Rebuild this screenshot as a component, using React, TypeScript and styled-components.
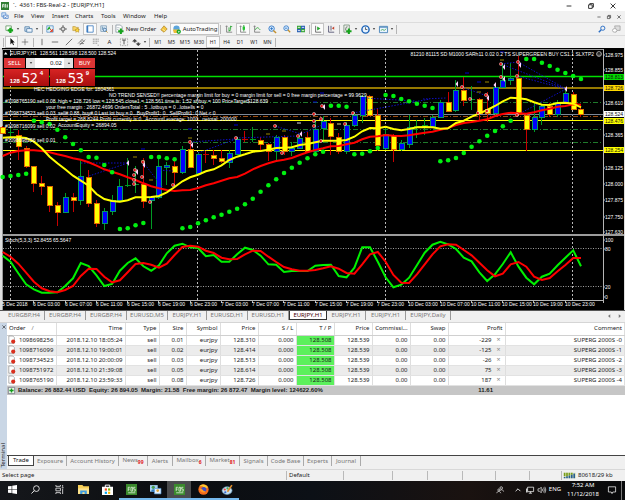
import React from "react";
import styled, { createGlobalStyle, css } from "styled-components";

const GlobalStyle = createGlobalStyle`
  * { box-sizing: border-box; }
  body { margin: 0; background: #f0f0f0; }
  button, input, table { font: inherit; color: inherit; }
  button { border: 0; padding: 0; background: none; }
`;

const FONT = `"Noto Sans", "Open Sans", sans-serif`;
const CHART_FONT = `"Liberation Sans", sans-serif`;

/* ---------- window frame ---------- */

const Page = styled.div`
  min-height: 100vh;
  display: flex;
  flex-direction: column;
  background: #f0f0f0;
  color: #1b1b1b;
  font: 6px/9px ${FONT};
  white-space: nowrap;
`;

const TitleBar = styled.header`
  height: 11px;
  display: flex;
  align-items: center;
  gap: 4px;
  padding: 0 1px;
  background: #fff;
`;

const TitleText = styled.h1`
  flex: 1;
  margin: 0;
  font: inherit;
`;

const WindowButtons = styled.div`
  display: flex;
`;

const WindowButton = styled.button<{ $w: number }>`
  width: ${(p) => p.$w}px;
  height: 9px;
  display: grid;
  place-items: center;
`;

const MenuBar = styled.nav`
  height: 11px;
  display: flex;
  align-items: center;
  padding: 0 2px 0 1px;
  background: #f1f1f1;
`;

const MenuItem = styled.button<{ $w: number }>`
  width: ${(p) => p.$w}px;
  height: 10px;
  text-align: left;
`;

const Spacer = styled.span`
  flex: 1;
`;

const Toolbar = styled.div`
  height: 13px;
  display: flex;
  align-items: center;
  padding: 0 2px;
  background: #f1f1f1;
  border-top: 1px solid #dcdcdc;
`;

const ToolButton = styled.button<{ $w: number; $on?: boolean }>`
  width: ${(p) => p.$w}px;
  height: 12px;
  display: flex;
  align-items: center;
  justify-content: center;
  gap: 2px;
  font-size: ${(p) => (p.$w < 15 ? 5 : 6)}px;
  ${(p) =>
    p.$on &&
    css`
      background: #fbfbfb;
      border: 1px solid #c4c4c4;
    `}
`;

const ToolSeparator = styled.span`
  width: 1px;
  height: 9px;
  margin: 0 1px;
  background: #b5b5b5;
`;

/* ---------- chart ---------- */

const ChartArea = styled.section`
  position: relative;
  background: #000;
`;

const ChartSvg = styled.svg`
  display: block;
  width: 100%;
  height: auto;
`;

const TradePanel = styled.form`
  position: absolute;
  left: 4px;
  top: 10px;
  width: 91px;
  display: grid;
  grid-template-columns: 1fr 1fr;
  gap: 1px;
  color: #fff;
`;

const LotRow = styled.div`
  grid-column: 1 / -1;
  height: 10px;
  display: flex;
  gap: 1px;
`;

const SideButton = styled.button`
  width: 21px;
  background: #dc3535;
  font-size: 6px;
  color: #fff;
`;

const LotBox = styled.div`
  flex: 1;
  min-width: 0;
  display: flex;
  align-items: stretch;
  background: #fff;
  color: #111;
`;

const Step = styled.button`
  width: 9px;
  background: #e3e3e3;
  display: grid;
  place-items: center;
`;

const LotInput = styled.input`
  flex: 1;
  min-width: 0;
  border: 0;
  padding: 0 2px;
  text-align: right;
  background: #fff;
`;

const PriceButton = styled.button`
  height: 17px;
  display: flex;
  align-items: flex-end;
  justify-content: center;
  gap: 2px;
  padding-bottom: 1px;
  background: linear-gradient(#d72424, #a90d0d);
  color: #fff;
  font: bold 6px/8px ${CHART_FONT};
`;

const BigDigits = styled.span`
  font: 14px/14px ${FONT};
`;

const Pip = styled.span`
  align-self: flex-start;
`;

const ChartTabs = styled.nav`
  height: 12px;
  display: flex;
  align-items: flex-start;
  padding-left: 4px;
  border-top: 1px solid #555;
  background: #f0f0f0;
  color: #777;
`;

const ChartTab = styled.button<{ $w: number; $on?: boolean }>`
  width: ${(p) => p.$w}px;
  height: 9px;
  border-right: 1px solid #999;
  ${(p) =>
    p.$on &&
    css`
      background: #fff;
      border: 1px solid #333;
      border-top: 0;
      color: #400;
    `}
`;

const TabArrows = styled.span`
  width: 13px;
  height: 9px;
  display: flex;
  justify-content: space-between;
  align-items: center;
  margin-right: 4px;
`;

/* ---------- terminal ---------- */

const Terminal = styled.section`
  flex: 1;
  display: flex;
  background: #fff;
  border-top: 1px solid #d5d5d5;
`;

const TerminalRail = styled.aside`
  width: 7px;
  display: flex;
  flex-direction: column;
  align-items: center;
  justify-content: space-between;
  padding: 2px 0 1px;
  background: #c9d6e5;
`;

const RailLabel = styled.span`
  writing-mode: vertical-rl;
  transform: rotate(180deg);
  line-height: 7px;
`;

const TerminalBody = styled.div`
  flex: 1;
  display: flex;
  flex-direction: column;
  justify-content: space-between;
`;

const Orders = styled.table`
  width: 100%;
  table-layout: fixed;
  border-collapse: collapse;
  text-align: right;
`;

const HeadCell = styled.th`
  height: 12px;
  padding: 0 2px;
  font-weight: normal;
  border-right: 1px solid #dedede;
  border-bottom: 1px solid #d0d0d0;
  &:first-child {
    text-align: left;
  }
`;

const SortMark = styled.span`
  margin-left: 6px;
  color: #777;
`;

const OrderRow = styled.tr`
  &:nth-child(even) {
    background: #ececec;
  }
`;

const Cell = styled.td<{ $hit?: boolean }>`
  height: 10px;
  padding: 0 2px 0 0;
  border-right: 1px solid #dedede;
  border-bottom: 1px solid #e2e2e2;
  ${(p) => p.$hit && "background: #5cf05c;"}
`;

const OrderCell = styled.div`
  display: flex;
  align-items: center;
  gap: 3px;
  padding-left: 1px;
`;

const ProfitCell = styled.div`
  display: grid;
  grid-template-columns: 1fr 8px;
  gap: 3px;
`;

const CloseOrder = styled.button`
  color: #888;
  font-size: 7px;
  line-height: 8px;
`;

const BalanceRow = styled.tr`
  background: #c6c6c6;
  font-family: ${CHART_FONT};
  font-weight: bold;
`;

const BalanceCell = styled.td`
  height: 9px;
  padding: 0 12px 0 0;
`;

const TerminalTabs = styled.nav`
  height: 14px;
  display: flex;
  align-items: flex-start;
  padding-left: 1px;
  background: #f0f0f0;
  border-top: 1px solid #444;
  color: #777;
`;

const TerminalTab = styled.button<{ $w: number; $on?: boolean }>`
  width: ${(p) => p.$w}px;
  height: 10px;
  border-right: 1px solid #aaa;
  ${(p) =>
    p.$on &&
    css`
      background: #fff;
      color: #111;
      border: 1px solid #444;
      border-top: 0;
    `}
`;

const Count = styled.sub`
  color: #e02020;
  font: bold 5px/5px ${FONT};
`;

const StatusBar = styled.footer`
  height: 12px;
  display: flex;
  align-items: center;
  background: #f0f0f0;
  border-top: 1px solid #d8d8d8;
`;

const StatusCell = styled.span<{ $w?: number }>`
  ${(p) => (p.$w ? `width: ${p.$w}px;` : "flex: 1;")}
  height: 9px;
  display: flex;
  align-items: center;
  gap: 2px;
  padding-left: 2px;
  & + & {
    border-left: 1px solid #b9b9b9;
  }
`;

/* ---------- task bar ---------- */

const TaskBar = styled.nav`
  height: 19px;
  display: flex;
  align-items: stretch;
  background: linear-gradient(90deg, #15171b, #0b0d10 30%, #0c1016 50%, #1a1210 75%, #08090b);
  color: #fff;
`;

const TaskButton = styled.button<{ $w?: number; $open?: boolean; $on?: boolean }>`
  width: ${(p) => p.$w ?? 24}px;
  display: grid;
  place-items: center;
  background: ${(p) => (p.$on ? "#4a4b4d" : "none")};
  border-bottom: 2px solid ${(p) => (p.$open ? "#76b9ed" : "transparent")};
`;

const Clock = styled.time`
  width: 32px;
  margin: 0 3px 0 5px;
  text-align: center;
`;

const DesktopEdge = styled.button`
  width: 4px;
  border-left: 1px solid #777;
`;

/* ---------- icons ---------- */

const art: Record<string, React.ReactNode> = {
  app: (<><rect width="10" height="10" fill="#2f7d32" /><path d="M2 7V3h2M2 5h2M5 7V3h1v4M8 3v4" stroke="#fff" fill="none" /></>),
  windows: (<><path d="M1 1h5v5H1z" fill="#dceafc" stroke="#5a8fd0" /><path d="M3 4h6v4H3z" fill="#fff" stroke="#4a80c8" /><path d="M4 6l2 1 2-2" stroke="#3a70c0" fill="none" /></>),
  newChart: (<><path d="M1 1h6v5H1z" fill="#fff" stroke="#6f9e6f" /><path d="M6 3v6M3 6h6" stroke="#15a51b" strokeWidth="2.6" /></>),
  profiles: (<><path d="M1 2h5v5H1z" fill="#d5e5f5" stroke="#5b87ae" /><path d="M3 4h6v4H3z" fill="#eef6ff" stroke="#5b87ae" /></>),
  market: (<><path d="M1 1h8v8H1z" fill="#e4f0fb" stroke="#5a93c6" /><path d="M2 6l2-3 1 2" stroke="#1aa31f" fill="none" strokeWidth="1.5" /><path d="M5 5l3 3M8 5v3H5" stroke="#dc4328" fill="none" strokeWidth="1.2" /></>),
  target: (<><circle cx="5" cy="5" r="2.6" fill="none" stroke="#555" /><path d="M5 0v4M5 6v4M0 5h4M6 5h4" stroke="#555" /></>),
  folder: (<><path d="M1 2h3l1 1h3v4H1z" fill="#f9d567" stroke="#b18a25" strokeWidth=".7" /><path d="M6.500 4l1 1.600 2 .3-1.400 1.200.3 2-1.900-1-1.800 1 .3-2L3.600 6l2-.4z" fill="#ffdd41" stroke="#a97b14" strokeWidth=".6" /></>),
  terminal: (<><path d="M1 1h8v8H1z" fill="#fff" stroke="#3b7bc0" /><path d="M2 1v8" stroke="#3b7bc0" strokeWidth="1.5" /></>),
  tester: (<><path d="M1 1h7v7H1z" fill="#e8f2fb" stroke="#7899b5" /><path d="M3 2v4M5 3v3" stroke="#58a" /><circle cx="6" cy="6" r="2" fill="#cfe7ff" stroke="#47729d" /><path d="M7.500 7.500L9.500 9.500" stroke="#bd8b24" /></>),
  newOrder: (<><path d="M1 0h5l2 2v6H1z" fill="#fff" stroke="#7b8a96" strokeWidth=".8" /><path d="M2 3h3M2 5h2" stroke="#89a" strokeWidth=".6" /><path d="M6.500 4v6M3.500 7h6" stroke="#16a31c" strokeWidth="2.300" /></>),
  editor: (<><path d="M1 6l4-5 4 4-4 4z" fill="#f4c640" stroke="#a2771a" strokeWidth=".8" /><path d="M3 5l4 3" stroke="#fff1a8" /></>),
  auto: (<><circle cx="5" cy="4" r="3.500" fill="#5ba4dc" /><path d="M1 5h7l-1 4H2z" fill="#edbd3b" /><circle cx="7.500" cy="7.500" r="2.400" fill="#17a52a" /><path d="M7 6.300v2.400l1.800-1.200z" fill="#fff" /></>),
  bars: (<><path d="M2 1v8h7M1 2l1-1 1 1" stroke="#555" fill="none" strokeWidth=".8" /><path d="M5 3v5M7 1v5M5 7h2M7 2h2" stroke="#1c9e25" /></>),
  candles: (<><path d="M2 1v8h7M1 2l1-1 1 1" stroke="#555" fill="none" strokeWidth=".8" /><path d="M6 0v8" stroke="#168d20" /><rect x="4.500" y="2" width="3" height="4" fill="#24c332" /></>),
  line: (<><path d="M2 1v8h7M1 2l1-1 1 1" stroke="#555" fill="none" strokeWidth=".8" /><path d="M3 6c2-4 3-3 6 0" stroke="#1c9e25" fill="none" /></>),
  zoomIn: (<><circle cx="4" cy="4" r="3" fill="#d9ecff" stroke="#2b74c4" /><path d="M4 2.500v3M2.500 4h3" stroke="#2b74c4" /><path d="M6 6l3 3" stroke="#c3902e" strokeWidth="1.600" /></>),
  zoomOut: (<><circle cx="4" cy="4" r="3" fill="#d9ecff" stroke="#2b74c4" /><path d="M2.500 4h3" stroke="#2b74c4" /><path d="M6 6l3 3" stroke="#c3902e" strokeWidth="1.600" /></>),
  tile: (<><path d="M0 1h5v4H0zM5 5h5v4H5z" fill="#3aa63a" /><path d="M5 1h5v4H5zM0 5h5v4H0z" fill="#2b62b5" /><path d="M1 3h3M6 3h3M1 7h3M6 7h3" stroke="#fff" /></>),
  scroll: (<><path d="M2 1v8h7" stroke="#555" fill="none" /><path d="M4 2v5l4-2.500z" fill="#23a52d" /></>),
  shift: (<><path d="M2 1v8h7M5 1v6" stroke="#446" fill="none" /><path d="M9 2v4L6 4z" fill="#c5432b" /></>),
  indicators: (<><path d="M1 0h6v8H1z" fill="#eef4ee" stroke="#68806a" strokeWidth=".8" /><path d="M3 6c0-4 1-4 2-4" stroke="#555" fill="none" /><path d="M6.500 4v6M3.500 7h6" stroke="#16a31c" strokeWidth="2.300" /></>),
  clock: (<><circle cx="5" cy="5" r="4" fill="#e9f4ff" stroke="#1d64b8" strokeWidth="1.600" /><path d="M5 2.500V5h2" stroke="#333" fill="none" strokeWidth=".8" /></>),
  template: (<><path d="M.5 1.500h9v7h-9z" fill="#e9f4ff" stroke="#4782b8" /><path d="M1 2.500h8" stroke="#4782b8" /><path d="M2 6l2-1 2 1 2-2" stroke="#2a9a35" fill="none" strokeWidth=".8" /></>),
  search: (<><circle cx="6" cy="4" r="2.600" fill="none" stroke="#2b6fc5" strokeWidth="1.200" /><path d="M4 6L1 9" stroke="#2b6fc5" strokeWidth="1.800" /></>),
  chat: (<><path d="M3 1h6v5H6L4 8z" fill="#ddd" stroke="#999" strokeWidth=".8" /><ellipse cx="3" cy="6" rx="2.500" ry="2" fill="#fff" stroke="#999" strokeWidth=".8" /></>),
  cursor: <path d="M3 0v8l2-2 1.500 3 1-.5L6 5.500h2.500z" fill="#111" />,
  cross: <path d="M5 1v8M1 5h8" stroke="#555" strokeWidth=".8" />,
  vline: <path d="M5 1v8" stroke="#555" />,
  hline: <path d="M1 5h8" stroke="#555" />,
  trend: <path d="M1 9l8-8" stroke="#555" />,
  channel: <path d="M0 7l6-6M2 9l7-7M3 4l4 3M5 2l3 3M2 7h5" stroke="#555" strokeWidth=".8" />,
  fibo: <path d="M1 1.500h8M1 4h8M1 6.500h6M7 9h2" stroke="#666" strokeWidth=".8" strokeDasharray="1.500 .5" />,
  label: (<><path d="M.5.500h9v9h-9z" fill="none" stroke="#777" strokeDasharray="1 1" strokeWidth=".8" /><path d="M2.500 2.500h5M5 2.500v5.500" stroke="#333" /></>),
  arrows: <path d="M3 1l3 3H4v1H2V4H0zM7 9L4 6h2V5h2v1h2z" fill="#444" />,
  caret: <path d="M2 3h6L5 7z" fill="#222" />,
  minimize: <path d="M1 5h8" stroke="#222" strokeWidth="1.500" />,
  restore: <path d="M3 3V1h6v6H7M1 3h6v6H1z" fill="none" stroke="#222" strokeWidth="1.500" />,
  close: <path d="M1 1l8 8M9 1L1 9" stroke="#222" strokeWidth="1.500" />,
  sheet: (<><path d="M1 0h5l2 2v7H1z" fill="#fff" stroke="#888" strokeWidth=".8" /><circle cx="6.500" cy="7" r="2.600" fill="#d92f1d" /></>),
  balance: (<><path d="M.5.500h9v9h-9z" fill="#eaf7ea" stroke="#667" /><path d="M5 2v6M2 5h6" stroke="#149b1c" strokeWidth="2" /></>),
  start: <path d="M0 1.500L4 1v3.700H0zM4.700.900L10 0v4.700H4.700zM0 5.400h4V9L0 8.500zM4.700 5.400H10V10L4.700 9.100z" fill="#fff" />,
  find: (<><circle cx="6" cy="4" r="3.200" fill="none" stroke="#fff" strokeWidth=".9" /><path d="M3.600 6.300L.5 9.500" stroke="#fff" /></>),
  taskview: <path d="M1 0v1.500h5V0M1 3.500h5v3H1zM1 10V8.500h5V10M8.500 0v2M8.500 4v6M7.500 3h2" fill="none" stroke="#eee" strokeWidth=".9" />,
  explorer: (<><path d="M0 1h4l1 1h5v7H0z" fill="#f7cf57" /><path d="M0 4h10v5H0z" fill="#fce28d" /><path d="M2 6h6v3H6V7.500H4V9H2z" fill="#3d9be0" /></>),
  store: (<><path d="M3 3V1h4v2" fill="none" stroke="#fff" strokeWidth=".9" /><path d="M0 2.500h10V10H0z" fill="#fff" /><path d="M2.500 4h2v2h-2z" fill="#f25022" /><path d="M5.500 4h2v2h-2z" fill="#7fba00" /><path d="M2.500 7h2v2h-2z" fill="#00a4ef" /><path d="M5.500 7h2v2h-2z" fill="#ffb900" /></>),
  fbs: (<><path d="M0 0h10v10H0z" fill="#3b8a2d" /><path d="M2 6.500V3h1.500M2 4.700h1.300M4.500 3v3.500H6V3zM8.500 3H7v1.700h1.400v1.800H7M2 8h6.500" stroke="#e9f5e5" fill="none" strokeWidth=".7" /></>),
  people: (<><path d="M0 1h7v6H0z" fill="#a7d2f3" /><circle cx="3" cy="3" r="1.500" fill="#4a9c4d" /><path d="M1 7c0-3 4-3 4 0z" fill="#2f7ac0" /><path d="M4 4h6v5H4z" fill="#e3f1fd" stroke="#4a8fcf" strokeWidth=".6" /><circle cx="7" cy="6" r="1.200" fill="#d9a33b" /></>),
  firefox: (<><circle cx="5" cy="5" r="4.700" fill="#f36b1c" /><path d="M1 2c2-2 6-2.500 8 1l-2 1-3-2z" fill="#ffcb2e" /><circle cx="5.300" cy="5" r="2.300" fill="#3f4fc4" /><path d="M1 4c1 0 2 .2 3 1s1 2 3 1.500C6 8.500 2 8 1 4z" fill="#ff9a28" /></>),
  paint: (<><ellipse cx="4.600" cy="6" rx="4.500" ry="3.500" fill="#c6dfef" stroke="#6ea7cb" strokeWidth=".6" /><circle cx="2.500" cy="5" r="1" fill="#e14545" /><circle cx="5" cy="4" r="1" fill="#46a94c" /><circle cx="3" cy="7.500" r="1" fill="#3565cf" /><path d="M5 7l4-6" stroke="#dc8b2b" strokeWidth="1.500" /></>),
  contact: (<><circle cx="6.500" cy="2.500" r="1.600" fill="none" stroke="#fff" strokeWidth=".8" /><circle cx="3.500" cy="5" r="1.300" fill="none" stroke="#fff" strokeWidth=".8" /><path d="M1 9c.5-3 4-3 5 0M5 6c2-2.500 4-1 4.500 1" fill="none" stroke="#fff" strokeWidth=".8" /></>),
  up: <path d="M1 7l4-4 4 4" fill="none" stroke="#fff" strokeWidth="1.400" />,
  monitor: (<><path d="M2 1.500h7.500v5.500H2zM5.500 7v2M3.500 9h4" fill="none" stroke="#fff" strokeWidth=".9" /><path d="M0 3h2v5H0z" fill="#ccc" /></>),
  speaker: (<><path d="M0 3.500h2l2-2v7l-2-2H0z" fill="none" stroke="#fff" strokeWidth=".8" /><path d="M5.500 3.500q1 1.500 0 3M7 2q2 3 0 6M8.500 1q2.500 4 0 8" stroke="#fff" fill="none" strokeWidth=".8" /></>),
  note: <path d="M.5 1h9v6.500H6L5 9.500 4 7.500H.5z" fill="none" stroke="#fff" strokeWidth=".9" />,
  signal: (<><path d="M0 1h10v8H0z" fill="#dfe8c9" /><path d="M.5 1v5M2.500 1v5M4.500 1v4M6.500 1v3" stroke="#7a9d1c" strokeWidth="1.400" /><path d="M.5 7v2M2.500 6v3M4.500 5v4M6.500 4v5M8.500 2v7" stroke="#2a5e8f" strokeWidth="1.400" /></>),
};

const Glyph = ({ name, size = 9, wide }: { name: string; size?: number; wide?: number }) => (
  <svg width={wide ?? size} height={size} viewBox="0 0 10 10" preserveAspectRatio={wide ? "none" : undefined} overflow="visible" aria-hidden="true">
    {art[name]}
  </svg>
);

type Tool = { icon?: string; w: number; text?: string; menu?: boolean; on?: boolean; sep?: boolean };
const SEP: Tool = { sep: true, w: 3 };

const mainTools: Tool[] = [
  { icon: "newChart", w: 20, menu: true },
  { icon: "profiles", w: 19, menu: true }, SEP,
  { icon: "market", w: 12 }, { icon: "target", w: 13 }, { icon: "folder", w: 14 },
  { icon: "terminal", w: 14, on: true }, { icon: "tester", w: 14 }, SEP,
  { icon: "newOrder", w: 43, text: "New Order" }, { icon: "editor", w: 13 },
  { icon: "auto", w: 49, text: "AutoTrading", on: true }, SEP,
  { icon: "bars", w: 14 }, { icon: "candles", w: 14, on: true }, { icon: "line", w: 14 },
  { icon: "zoomIn", w: 16 }, { icon: "zoomOut", w: 14 }, { icon: "tile", w: 14 }, SEP,
  { icon: "scroll", w: 13, on: true }, { icon: "shift", w: 14 }, SEP,
  { icon: "indicators", w: 18, menu: true }, { icon: "clock", w: 18, menu: true },
  { icon: "template", w: 18, menu: true }, SEP,
];

const drawTools: Tool[] = [
  SEP, { icon: "cursor", w: 13, on: true }, { icon: "cross", w: 14 }, SEP,
  { icon: "vline", w: 13 }, { icon: "hline", w: 14 }, { icon: "trend", w: 13 },
  { icon: "channel", w: 14 }, { icon: "fibo", w: 13 }, { text: "A", w: 15 },
  { icon: "label", w: 13 }, { icon: "arrows", w: 18, menu: true }, SEP,
  { text: "M1", w: 14 }, { text: "M5", w: 13 }, { text: "M15", w: 14 }, { text: "M30", w: 14 },
  { text: "H1", w: 14, on: true }, { text: "H4", w: 13 }, { text: "D1", w: 14 },
  { text: "W1", w: 14 }, { text: "MN", w: 13 }, SEP,
];

const Tools = ({ items }: { items: Tool[] }) => (
  <>
    {items.map((t, i) =>
      t.sep ? (
        <ToolSeparator key={i} />
      ) : (
        <ToolButton key={i} type="button" $w={t.w} $on={t.on} aria-label={t.text ?? t.icon}>
          {t.icon && <Glyph name={t.icon} size={t.w < 15 ? 8 : 9} />}
          {t.text}
          {t.menu && <Glyph name="caret" size={4} />}
        </ToolButton>
      )
    )}
  </>
);

/* ---------- chart data ---------- */

const barX = (i: number) => 10.5 + i * 7.815;

// bar number, kind (u = up, d = down), high, top, bottom, low
const bars: [number, "u" | "d", number, number, number, number][] = [
  [-1, "d", 126, 127, 133, 133], [0, "u", 128, 132, 133, 139], [1, "d", 130, 135, 146, 160],
  [2, "d", 146, 148, 166, 168], [3, "d", 166, 166, 183, 192], [4, "d", 176, 183, 186, 195],
  [5, "d", 186, 186, 205, 212], [6, "d", 202, 205, 212, 226], [7, "u", 193, 197, 212, 213],
  [8, "d", 193, 197, 200, 212], [9, "u", 160, 176, 200, 205], [10, "d", 170, 177, 203, 207],
  [11, "d", 200, 203, 223, 227], [12, "u", 208, 211, 223, 230], [13, "u", 195, 200, 211, 215],
  [14, "u", 179, 186, 200, 202], [15, "u", 158, 185, 186, 187], [16, "u", 166, 184, 185, 193],
  [17, "d", 158, 184, 201, 208], [18, "u", 197, 197, 200, 229], [19, "u", 156, 166, 197, 199],
  [20, "u", 162, 165, 167, 185], [21, "d", 158, 166, 172, 187], [22, "u", 146, 149, 172, 174],
  [23, "d", 140, 149, 167, 168], [24, "u", 152, 154, 173, 174], [25, "d", 151, 154, 154, 163],
  [26, "d", 150, 155, 158, 165], [27, "d", 150, 158, 161, 163], [28, "u", 150, 153, 162, 168],
  [29, "u", 137, 139, 154, 154], [30, "d", 131, 139, 139, 142], [31, "u", 127, 139, 139, 142],
  [32, "d", 137, 140, 144, 152], [33, "d", 143, 144, 151, 161], [34, "u", 135, 137, 151, 161],
  [35, "d", 135, 137, 151, 155], [36, "u", 142, 148, 151, 156], [37, "u", 136, 138, 148, 149],
  [38, "d", 132, 137, 151, 152], [39, "u", 120, 129, 151, 153], [40, "u", 116, 121, 128, 143],
  [41, "d", 118, 123, 136, 155], [42, "d", 133, 137, 151, 154], [43, "u", 122, 125, 151, 154],
  [44, "u", 112, 115, 125, 127], [45, "u", 95, 96, 115, 123], [46, "d", 95, 96, 115, 116],
  [47, "d", 108, 115, 145, 151], [48, "u", 126, 134, 148, 150], [49, "d", 134, 135, 149, 162],
  [50, "u", 140, 143, 149, 151], [51, "u", 115, 127, 144, 148], [52, "u", 120, 126, 127, 138],
  [53, "u", 118, 125, 126, 135], [54, "u", 115, 117, 126, 127], [55, "u", 100, 102, 117, 118],
  [56, "d", 92, 102, 111, 112], [57, "u", 80, 90, 110, 112], [58, "d", 77, 90, 100, 106],
  [59, "u", 86, 99, 99, 110], [60, "d", 98, 99, 113, 121], [61, "d", 92, 109, 113, 122],
  [62, "u", 83, 87, 113, 115], [63, "u", 63, 80, 87, 88], [64, "u", 63, 78, 80, 85],
  [65, "d", 56, 78, 114, 116], [66, "d", 114, 115, 129, 151], [67, "u", 102, 117, 129, 132],
  [68, "u", 104, 106, 117, 125], [69, "d", 103, 106, 114, 117], [70, "u", 100, 102, 114, 117],
  [71, "u", 88, 93, 102, 103], [72, "d", 92, 94, 109, 110], [73, "d", 105, 109, 114, 117],
];

const fastMa = [137.7, 137.3, 137.3, 138, 141.7, 148.3, 156.7, 163.3, 169.3, 175.7, 180.7, 185.7, 194, 199, 201, 201.7, 200.3, 197.3, 197.3, 197, 196, 192.3, 187, 181.3, 177.3, 174.7, 171.3, 169.3, 165.3, 160, 156.7, 154.3, 151.7, 151, 149.7, 148, 147.7, 147.3, 145, 144, 142.3, 140.7, 140.7, 140.7, 140, 136.7, 131.3, 128, 128.3, 126.7, 129, 130.3, 129, 127.3, 127, 127.3, 128.7, 128.3, 123, 120.7, 116.7, 113.3, 110, 106, 101.3, 97.7, 98.3, 99.3, 102.3, 104.7, 105, 103, 102.7, 103.7, 107.3];
const slowMa = [156, 152.7, 151, 150.3, 150.3, 151, 152.3, 154.3, 156, 158.3, 159.7, 162.3, 165.7, 169.3, 171.7, 174.3, 177.3, 180, 183.3, 186.3, 188.3, 190, 191, 190.3, 190, 188, 185.3, 183.3, 180.7, 178.3, 177, 173.7, 169.3, 166, 163.3, 161, 159.7, 158, 155, 152.3, 150, 148.3, 146.3, 146, 144.3, 142.7, 139.3, 136.7, 136.3, 135, 135.7, 136, 135.3, 134, 132.7, 131.7, 129.7, 128, 125, 123, 122, 120.7, 119.3, 116, 114, 112.7, 113.3, 113.7, 112.3, 110.3, 108.7, 106.7, 106, 104.3, 104.7];

const sar = [177, 176, 175, 173.7, 120.7, 122.3, 124, 129.7, 137.3, 144, 150.3, 157, 157.7, 165, 172.3, 229, 228.3, 225.3, 223, 157, 157, 158.3, 159.3, 228.3, 227, 223.3, 220.3, 217.3, 214.7, 211.7, 208.7, 204.3, 198.7, 191.7, 185.3, 179.3, 173, 167.7, 162.7, 158.3, 154.3, 151.7, 105.7, 105.7, 106.7, 154.3, 153.7, 151.3, 148, 95, 96, 99, 101.3, 103.7, 105.7, 108, 161.3, 160.3, 158, 153, 146.7, 141.3, 135.7, 131, 126.3, 120.7, 0, 59, 59, 62.7, 66, 69.7, 73, 76, 79];

// oscillator values in thirds of a unit below y = 230
const stochMain = [77, 95, 130, 163, 178, 188, 188, 187, 168, 145, 99, 108, 136, 168, 162, 122, 99, 85, 109, 122, 106, 70, 47, 41, 52, 54, 79, 75, 95, 95, 73, 53, 60, 77, 103, 104, 126, 123, 123, 123, 107, 105, 104, 138, 142, 113, 52, 52, 95, 142, 172, 164, 143, 106, 68, 44, 35, 43, 57, 83, 94, 127, 153, 133, 102, 67, 110, 143, 163, 140, 131, 106, 83, 61, 109];
const stochSignal = [66, 80, 101, 128, 155, 175, 184, 187, 180, 168, 138, 116, 117, 140, 157, 151, 127, 102, 99, 104, 113, 101, 75, 51, 47, 50, 62, 69, 83, 88, 87, 73, 62, 63, 80, 96, 111, 118, 122, 122, 120, 115, 109, 116, 129, 131, 103, 73, 66, 95, 135, 158, 159, 133, 103, 73, 49, 43, 44, 60, 76, 98, 121, 139, 131, 103, 96, 110, 140, 150, 144, 124, 105, 84, 84];

const deals: [number, number][] = [[190, 142], [135, 170], [134, 175], [134, 180], [134, 184], [143, 162], [142, 177], [150, 202], [173, 185], [236, 138], [275, 126], [282, 153], [298, 136], [314, 121], [314, 126], [321, 141], [345, 124], [322, 106], [314, 114], [321, 119], [353, 113], [462, 87], [470, 99], [486, 95], [487, 111], [478, 113], [501, 64], [501, 77], [518, 62], [517, 76], [517, 115]];
const exits: [number, number][] = [[128, 163], [137, 172], [144, 165], [192, 145], [301, 134], [324, 107], [457, 84], [495, 85], [504, 67], [504, 79], [520, 65], [566, 89], [488, 98]];
const links: [number, number, number, number][] = [[501, 64, 566, 89], [518, 62, 566, 89], [517, 76, 566, 89], [517, 115, 566, 89], [501, 64, 518, 62], [423, 99, 446, 98], [462, 87, 487, 96], [353, 113, 430, 99], [365, 98, 415, 101], [81, 163, 128, 163], [89, 176, 128, 163], [143, 162, 163, 188], [190, 142, 236, 139], [198, 153, 236, 139], [236, 138, 298, 136], [275, 126, 301, 134], [157, 170, 173, 171], [301, 134, 322, 125]];
const ticks: [number, number, string][] = [[143, 149, "#00c"], [135, 157, "#980"], [143, 161, "#980"], [151, 180, "#980"], [190, 129, "#00c"], [190, 138, "#980"], [236, 125, "#00c"], [268, 134, "#980"], [284, 131, "#980"], [299, 123, "#ddd"], [339, 124, "#dd8"], [322, 93, "#00c"], [315, 102, "#00c"], [479, 82, "#00c"], [487, 82, "#980"], [479, 92, "#980"], [502, 60, "#980"], [502, 52, "#00c"], [467, 73, "#00c"]];

const polyline = (ys: number[], toY: (v: number) => number = (v) => v) =>
  ys.map((v, k) => `${barX(k - 1).toFixed(1)},${toY(v).toFixed(1)}`).join(" ");

const priceLabels: [string, number, string?][] = [
  ["128.975", 55], ["128.855", 70], ["128.813", 77, "#00e000"], ["128.726", 88, "#ffd800"],
  ["128.610", 103], ["128.524", 114, "#ffffff"], ["128.476", 121, "#ffff00"], ["128.365", 135],
  ["128.254", 150, "#ffff00"], ["128.125", 168], ["128.000", 184], ["127.875", 200],
  ["127.750", 217], ["127.630", 232], ["100", 240], ["80", 249], ["20", 287], ["0", 297],
];

const timeLabels = ["5 Dec 2018", "6 Dec 03:00", "6 Dec 07:00", "6 Dec 11:00", "6 Dec 15:00", "6 Dec 19:00", "6 Dec 23:00", "7 Dec 03:00", "7 Dec 07:00", "7 Dec 11:00", "7 Dec 15:00", "7 Dec 19:00", "7 Dec 23:00", "10 Dec 03:00", "10 Dec 07:00", "10 Dec 11:00", "10 Dec 15:00", "10 Dec 19:00", "10 Dec 23:00"];

const notes: [number, number, string][] = [
  [34, 91, "HEC HEDGING EDGE for: 1804361"],
  [109, 97, "NO TREND SENSED!! percentage margin limit for buy = 0 margin limit for sell = 0 free margin percentage = 99.9629"],
  [5, 103, "#1098765190 sell 0.08"],
  [58, 103, "high = 128.726 low = 128.545 close1 = 128.561 time is: 1:52 shbuy = 100 PriceTarget$128.639"],
  [46, 109, "your free margin : 26872.4696 OrdersTotal : 5 ..lotbuys = 0 ..lotsells = 0"],
  [5, 115, "#1098734523 sell 0.03"],
  [58, 115, "sell# 0.88, buy# 0 Last lot buy = 0...BuyProfit1: 0...SellProfit1: 0 Net < 0"],
  [46, 121, "Profit target = 268.8244 Profit currently is:0...AccountLeverage: 1000...netotal: 200000"],
  [58, 127, "AccountEquity = 26894.05"],
  [5, 128, "#1098716099 sell 0.02"],
  [5, 142, "#1098698256 sell 0.01"],
];

const Chart = () => (
  <ChartSvg viewBox="0 48 625 262" role="img" aria-label="EURJPY hourly chart">
    <rect x="0" y="48" width="625" height="262" fill="#000" />
    <path d="M0 48h2v262H0z" fill="#ddd" />
    <path d="M2.500 310V49.500H603" stroke="#9a9a9a" fill="none" />
    <g strokeWidth="1">
      {[10.5, 197.5, 385.5, 572.5].map((x) => (
        <path key={x} d={`M${x} 50V300`} stroke="#b8b8b8" strokeDasharray="2 2" />
      ))}
      <path d="M3 76.500H603" stroke="#00e000" strokeWidth="1.500" />
      <path d="M3 88H603" stroke="#c8a200" strokeWidth="1.500" />
      <path d="M3 102.500H603M3 129.500H603M3 142.500H603" stroke="#1f7a2c" strokeDasharray="5 2 1 2" />
      <path d="M3 114.500H603" stroke="#7d8796" />
      <path d="M3 116.500H603" stroke="#9a4a10" strokeDasharray="5 2 1 2" />
      <path d="M3 120.500H603M3 150.500H603" stroke="#ffff00" />
      <path d="M3 248.500H603M3 286.500H603" stroke="#b0b0b0" strokeDasharray="1 1.500" strokeWidth=".9" />
    </g>

    <g shapeRendering="crispEdges">
      {bars.map(([i, kind, high, top, bottom, low]) => {
        const x = Math.round(barX(i) - 0.5);
        const edge = kind === "u" ? "#009a24" : "#c80000";
        return (
          <g key={i}>
            <path d={`M${x + 0.5} ${high}V${low}`} stroke={edge} />
            {bottom - top > 1 ? (
              <rect x={x - 2} y={top} width="5" height={bottom - top} fill={kind === "u" ? "#0000ff" : "#ffff00"} stroke={kind === "u" ? "#009a60" : "#e06a00"} strokeWidth="1" />
            ) : (
              <path d={`M${x - 2} ${top + 0.5}h6`} stroke={edge} />
            )}
          </g>
        );
      })}
    </g>

    <g stroke="#1010d8" strokeDasharray="1.500 1.500" strokeWidth=".9">
      {links.map(([a, b, c, d], k) => (
        <path key={k} d={`M${a} ${b}L${c} ${d}`} />
      ))}
    </g>
    {ticks.map(([x, y, c], k) => (
      <path key={k} d={`M${x - 2} ${y}h4`} stroke={c} />
    ))}
    <polyline points={polyline(slowMa)} fill="none" stroke="#f00" strokeWidth="2" />
    <polyline points={polyline(fastMa)} fill="none" stroke="#ff0" strokeWidth="2" />
    {sar.map((y, k) => y > 0 && <circle key={k} cx={barX(k - 1)} cy={y} r="2.300" fill="#00f010" />)}
    {exits.map(([x, y], k) => (
      <path key={k} d={`M${x - 1.5} ${y}l2.500 -3v6z`} fill="#ffd5ff" />
    ))}
    {deals.map(([x, y], k) => (
      <g key={k}>
        <circle cx={x} cy={y} r="1.800" fill="#f3dada" />
        <circle cx={x - 0.3} cy={y} r="1.200" fill="#e01010" />
      </g>
    ))}

    <path d="M2 235H625" stroke="#9c9c9c" strokeWidth="2" />
    <path d="M603.500 49V303M3 300.500H603" stroke="#b5b5b5" fill="none" />
    <polyline points={polyline(stochMain, (v) => 230 + v / 3)} fill="none" stroke="#00f000" strokeWidth="2" />
    <polyline points={polyline(stochSignal, (v) => 230 + v / 3)} fill="none" stroke="#f00" strokeWidth="2" />

    <g fontFamily={CHART_FONT} fontSize="5" fill="#fff">
      <path d="M4 54.500h3.500L5.700 52z" fill="#fff" />
      <text x="10" y="55">EURJPY,H1&#160; 128.561 128.598 128.500 128.524</text>
      <text x="594" y="56" textAnchor="end">81210 81115 SD M1000 SARh11 0.02 0.2 TS SUPERGREEN BUY CS1.1 SLXTP2</text>
      <circle cx="599" cy="54" r="2.400" fill="none" stroke="#eee" strokeWidth=".7" />
      <path d="M597.600 54.600q1.400 1.400 2.800 0M598 53v.6M600 53v.6" stroke="#eee" fill="none" strokeWidth=".6" />
      {notes.map(([x, y, t]) => (
        <text key={t} x={x} y={y}>{t}</text>
      ))}
      <text x="5" y="242">Stoch(5,3,3) 52.8455 65.5647</text>
      {priceLabels.map(([t, y, bg]) => (
        <g key={t}>
          {bg ? <rect x="604" y={y - 3} width="20" height="6" fill={bg} /> : <path d={`M603 ${y}h2`} stroke="#b5b5b5" />}
          <text x="605" y={y + 2} fill={bg ? "#111" : "#fff"}>{t}</text>
        </g>
      ))}
      {timeLabels.map((t, k) => (
        <g key={t}>
          <path d={`M${Math.round(2 + k * 31.26) + 0.5} 300v3`} stroke="#b5b5b5" />
          <text x={Math.round(2 + k * 31.26)} y="306">{t}</text>
        </g>
      ))}
    </g>
    <path d="M624.500 48V310" stroke="#ddd" />
  </ChartSvg>
);

/* ---------- tables and tabs ---------- */

const menus: [string, number][] = [["File", 17], ["View", 21], ["Insert", 23], ["Charts", 26], ["Tools", 22], ["Window", 31], ["Help", 20]];

const chartTabs: [string, number][] = [["EURGBP,H4", 41], ["EURGBP,H4", 41], ["EURGBP,H4", 41], ["EURUSD,M5", 41], ["EURJPY,H1", 39], ["EURUSD,H1", 41], ["EURUSD,H1", 41], ["EURJPY,H1", 38], ["EURJPY,H1", 39], ["EURJPY,H1", 40], ["EURJPY,Daily", 45]];

const columns: [string, number?][] = [["Order", 49], ["Time", 69], ["Type", 34], ["Size", 27], ["Symbol", 34], ["Price", 38], ["S / L", 38], ["T / P", 38], ["Price", 38], ["Commissi...", 38], ["Swap", 38], ["Profit", 57], ["Comment"]];

const orders = [
  ["1098698256", "2018.12.10 18:05:24", "0.01", "128.310", "-229", "SUPERG 2000S -0"],
  ["1098716099", "2018.12.10 19:00:01", "0.02", "128.414", "-125", "SUPERG 2000S -1"],
  ["1098734523", "2018.12.10 20:00:09", "0.03", "128.513", "-26", "SUPERG 2000S -2"],
  ["1098751972", "2018.12.10 21:39:08", "0.05", "128.614", "75", "SUPERG 2000S -3"],
  ["1098765190", "2018.12.10 23:59:33", "0.08", "128.726", "187", "SUPERG 2000S -4"],
];

const terminalTabs: [string, number, string?][] = [["Trade", 26], ["Exposure", 33], ["Account History", 52], ["News", 29, "99"], ["Alerts", 25], ["Mailbox", 33, "6"], ["Market", 34, "81"], ["Signals", 28], ["Code Base", 36], ["Experts", 28], ["Journal", 29]];

const OrdersTable = () => (
  <Orders>
    <colgroup>
      {columns.map(([, w], i) => (
        <col key={i} width={w} />
      ))}
    </colgroup>
    <thead>
      <tr>
        {columns.map(([name], i) => (
          <HeadCell key={i} scope="col">{name}{i === 0 && <SortMark>/</SortMark>}</HeadCell>
        ))}
      </tr>
    </thead>
    <tbody>
      {orders.map(([id, time, size, open, profit, comment]) => (
        <OrderRow key={id}>
          <Cell><OrderCell><Glyph name="sheet" size={8} />{id}</OrderCell></Cell>
          <Cell>{time}</Cell>
          <Cell>sell</Cell>
          <Cell>{size}</Cell>
          <Cell>eurjpy</Cell>
          <Cell>{open}</Cell>
          <Cell>0.000</Cell>
          <Cell $hit>128.508</Cell>
          <Cell>128.539</Cell>
          <Cell>0.00</Cell>
          <Cell>0.00</Cell>
          <Cell><ProfitCell>{profit}<CloseOrder type="button" aria-label={`Close ${id}`}>×</CloseOrder></ProfitCell></Cell>
          <Cell>{comment}</Cell>
        </OrderRow>
      ))}
      <BalanceRow>
        <BalanceCell colSpan={11}>
          <OrderCell>
            <Glyph name="balance" size={7} />
            Balance: 26 882.44 USD&#160; Equity: 26 894.05&#160; Margin: 21.58&#160; Free margin: 26 872.47&#160; Margin level: 124622.60%
          </OrderCell>
        </BalanceCell>
        <BalanceCell>11.61</BalanceCell>
        <BalanceCell />
      </BalanceRow>
    </tbody>
  </Orders>
);

export default function App() {
  return (
    <Page>
      <GlobalStyle />
      <TitleBar>
        <Glyph name="app" size={8} />
        <TitleText>`. &#160;4361: FBS-Real-2 - [EURJPY,H1]</TitleText>
        <WindowButtons>
          <WindowButton $w={22} aria-label="Minimize"><Glyph name="minimize" size={6} /></WindowButton>
          <WindowButton $w={22} aria-label="Restore"><Glyph name="restore" size={6} /></WindowButton>
          <WindowButton $w={22} aria-label="Close"><Glyph name="close" size={6} /></WindowButton>
        </WindowButtons>
      </TitleBar>
      <MenuBar>
        <MenuItem $w={13} aria-label="Window menu"><Glyph name="windows" size={8} /></MenuItem>
        {menus.map(([name, w]) => (
          <MenuItem key={name} $w={w}>{name}</MenuItem>
        ))}
        <Spacer />
        <WindowButtons>
          <WindowButton $w={10} aria-label="Minimize chart"><Glyph name="minimize" size={4} /></WindowButton>
          <WindowButton $w={10} aria-label="Restore chart"><Glyph name="restore" size={4} /></WindowButton>
          <WindowButton $w={9} aria-label="Close chart"><Glyph name="close" size={4} /></WindowButton>
        </WindowButtons>
      </MenuBar>
      <Toolbar>
        <Tools items={mainTools} />
        <Spacer />
        <ToolButton $w={14} aria-label="Search"><Glyph name="search" size={8} /></ToolButton>
        <ToolButton $w={14} aria-label="Chat"><Glyph name="chat" size={9} /></ToolButton>
      </Toolbar>
      <Toolbar>
        <Tools items={drawTools} />
      </Toolbar>

      <ChartArea>
        <Chart />
        <TradePanel onSubmit={(e) => e.preventDefault()}>
          <LotRow>
            <SideButton type="button">SELL</SideButton>
            <LotBox>
              <Step type="button" aria-label="Less"><Glyph name="caret" size={4} /></Step>
              <LotInput aria-label="Lots" defaultValue="0.02" />
              <Step type="button" aria-label="More">
                <svg width="4" height="4" viewBox="0 0 10 10" aria-hidden="true"><path d="M2 7h6L5 3z" fill="#222" /></svg>
              </Step>
            </LotBox>
            <SideButton type="button">BUY</SideButton>
          </LotRow>
          <PriceButton type="button">128<BigDigits>52</BigDigits><Pip>4</Pip></PriceButton>
          <PriceButton type="button">128<BigDigits>53</BigDigits><Pip>9</Pip></PriceButton>
        </TradePanel>
      </ChartArea>

      <ChartTabs>
        {chartTabs.map(([name, w], i) => (
          <ChartTab key={i} $w={w} $on={i === 7}>{name}</ChartTab>
        ))}
        <Spacer />
        <TabArrows>
          <svg width="3" height="4" viewBox="0 0 4 5" aria-hidden="true"><path d="M3 0v5L0 2.500z" fill="#777" /></svg>
          <svg width="3" height="4" viewBox="0 0 4 5" aria-hidden="true"><path d="M1 0v5l3-2.500z" fill="#777" /></svg>
        </TabArrows>
      </ChartTabs>

      <Terminal>
        <TerminalRail>
          <Glyph name="close" size={4} />
          <RailLabel>Terminal</RailLabel>
        </TerminalRail>
        <TerminalBody>
          <OrdersTable />
          <TerminalTabs>
            {terminalTabs.map(([name, w, count], i) => (
              <TerminalTab key={name} $w={w} $on={i === 0}>
                {name}
                {count && <Count>{count}</Count>}
              </TerminalTab>
            ))}
          </TerminalTabs>
        </TerminalBody>
      </Terminal>

      <StatusBar>
        <StatusCell>Select page</StatusCell>
        <StatusCell $w={57}>Default</StatusCell>
        <StatusCell $w={49} />
        <StatusCell $w={35} />
        <StatusCell $w={35} />
        <StatusCell $w={33} />
        <StatusCell $w={34} />
        <StatusCell $w={32} />
        <StatusCell $w={64}><Glyph name="signal" size={7} wide={12} />80618/29 kb</StatusCell>
      </StatusBar>

      <TaskBar>
        <TaskButton $w={24} aria-label="Start"><Glyph name="start" size={9} /></TaskButton>
        <TaskButton $w={23} aria-label="Find"><Glyph name="find" size={9} /></TaskButton>
        <TaskButton $w={24} aria-label="Task view"><Glyph name="taskview" size={9} /></TaskButton>
        <TaskButton aria-label="Explorer"><Glyph name="explorer" size={11} /></TaskButton>
        <TaskButton aria-label="Store"><Glyph name="store" size={11} /></TaskButton>
        <TaskButton $open aria-label="FBS 1"><Glyph name="fbs" size={11} /></TaskButton>
        <TaskButton $open aria-label="Accounts"><Glyph name="people" size={11} /></TaskButton>
        <TaskButton $open $on aria-label="FBS 2"><Glyph name="fbs" size={11} /></TaskButton>
        <TaskButton $open aria-label="Firefox"><Glyph name="firefox" size={11} /></TaskButton>
        <TaskButton $open aria-label="Paint"><Glyph name="paint" size={11} /></TaskButton>
        <Spacer />
        <TaskButton $w={24} aria-label="People"><Glyph name="contact" size={8} /></TaskButton>
        <TaskButton $w={12} aria-label="Hidden icons"><Glyph name="up" size={6} /></TaskButton>
        <TaskButton $w={12} aria-label="Network"><Glyph name="monitor" size={8} /></TaskButton>
        <TaskButton $w={12} aria-label="Volume"><Glyph name="speaker" size={8} /></TaskButton>
        <TaskButton $w={14}>ENG</TaskButton>
        <Clock>7:52 AM<br />11/12/2018</Clock>
        <TaskButton $w={19} aria-label="Notifications"><Glyph name="note" size={8} /></TaskButton>
        <DesktopEdge aria-label="Show desktop" />
      </TaskBar>
    </Page>
  );
}
